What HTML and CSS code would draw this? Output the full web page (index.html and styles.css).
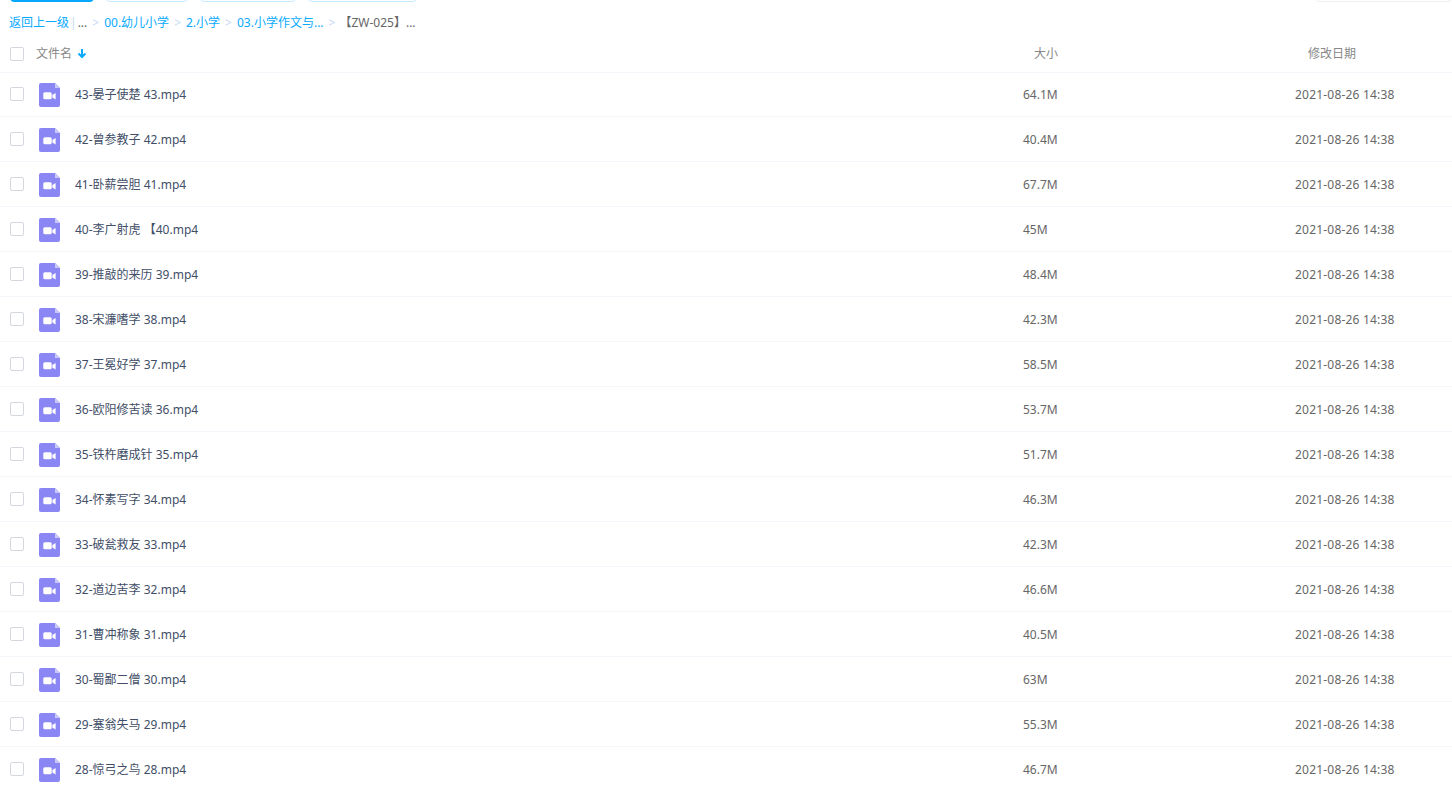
FILE: index.html
```html
<!DOCTYPE html>
<html lang="en">
<head>
    <meta charset="UTF-8">
    <title>文件列表</title>
    <link rel="stylesheet" href="styles.css">
</head>
<body>
    <div class="toolbar">
        <button class="btn btn-primary"></button>
        <button class="btn btn-a"></button>
        <button class="btn btn-b"></button>
        <button class="btn btn-c"></button>
        <button class="btn-search"></button>
    </div>

    <div class="crumbs">
        <a href="#">返回上一级</a><span class="pipe">|</span><span class="dots">...</span>
        <span class="sep">&gt;</span><a href="#">00.幼儿小学</a>
        <span class="sep">&gt;</span><a href="#">2.小学</a>
        <span class="sep">&gt;</span><a href="#">03.小学作文与...</a>
        <span class="sep">&gt;</span><span class="current">【ZW-025】...</span>
    </div>

    <div class="row head">
        <span class="check"></span>
        <span class="name">文件名 <svg class="arrow" width="10" height="11" viewBox="0 0 10 11"><path d="M5 1v8M1.5 5.5 5 9l3.5-3.5" fill="none" stroke="#09aaff" stroke-width="2"/></svg></span>
        <span class="size">大小</span>
        <span class="date">修改日期</span>
    </div>

    <div id="list"></div>

    <script src="list.js"></script>
</body>
</html>
```
FILE: list.js
```js
var files = [
    ["43-晏子使楚 43.mp4", "64.1M"],
    ["42-曾参教子 42.mp4", "40.4M"],
    ["41-卧薪尝胆 41.mp4", "67.7M"],
    ["40-李广射虎 【40.mp4", "45M"],
    ["39-推敲的来历 39.mp4", "48.4M"],
    ["38-宋濂嗜学 38.mp4", "42.3M"],
    ["37-王冕好学 37.mp4", "58.5M"],
    ["36-欧阳修苦读 36.mp4", "53.7M"],
    ["35-铁杵磨成针 35.mp4", "51.7M"],
    ["34-怀素写字 34.mp4", "46.3M"],
    ["33-破瓮救友 33.mp4", "42.3M"],
    ["32-道边苦李 32.mp4", "46.6M"],
    ["31-曹冲称象 31.mp4", "40.5M"],
    ["30-蜀鄙二僧 30.mp4", "63M"],
    ["29-塞翁失马 29.mp4", "55.3M"],
    ["28-惊弓之鸟 28.mp4", "46.7M"]
];

var icon = '<svg class="icon" width="21" height="24" viewBox="0 0 21 24">' +
    '<path d="M2 0h14l5 5v17a2 2 0 0 1-2 2H2a2 2 0 0 1-2-2V2a2 2 0 0 1 2-2z" fill="#8a86f4"/>' +
    '<path d="M16 0l5 5h-5z" fill="#c9c7fb"/>' +
    '<rect x="4.3" y="9.3" width="8.4" height="7" rx="1.5" fill="#fff"/>' +
    '<path d="M13.4 12l3.2-2v6.4l-3.2-2z" fill="#fff"/></svg>';

var html = "";
for (var i = 0; i < files.length; i++) {
    html += '<div class="row item"><span class="check"></span>' + icon +
        '<span class="title">' + files[i][0] + '</span>' +
        '<span class="size">' + files[i][1] + '</span>' +
        '<span class="date">2021-08-26 14:38</span></div>';
}
document.getElementById("list").innerHTML = html;
```
FILE: styles.css
```css
body {
    margin: 0;
    height: 786px;
    overflow: hidden;
    background-color: #fff;
    font-family: "Noto Sans", "Noto Sans CJK SC", sans-serif;
    font-size: 12px;
    line-height: 16px;
    color: #424e67;
}
.toolbar {
    display: flex;
    height: 2px;
    padding-left: 10px;
    overflow: hidden;
}
.btn {
    height: 30px;
    margin-top: -28px;
    margin-right: 12px;
    border: 1px solid #c3eaff;
    border-radius: 4px;
    background-color: #fff;
    box-sizing: border-box;
}
.btn-primary {
    width: 84px;
    border-color: #06a7ff;
    background-color: #06a7ff;
}
.btn-a { width: 82px; }
.btn-b { width: 96px; }
.btn-c { width: 109px; }
.btn-search {
    width: 137px;
    height: 30px;
    margin-top: -28px;
    margin-left: auto;
    border: 1px solid #eeeeee;
    border-radius: 4px;
    background-color: #fff;
}
.crumbs {
    display: flex;
    align-items: center;
    height: 20px;
    margin-top: 11px;
    padding-left: 9px;
    white-space: pre;
    color: #666;
}
.crumbs a {
    color: #09aaff;
    text-decoration: none;
}
.pipe {
    margin: 0 1px;
    color: #c4d8f4;
}
.sep {
    margin: 0 5px;
    color: #c4d8f4;
}
.current {
    margin-left: -1px;
}
.row {
    display: flex;
    align-items: center;
    height: 44px;
    border-bottom: 1px solid #f3f6fb;
}
.head {
    height: 39px;
    color: #888;
}
#list {
    margin-top: -1px;
}
.check {
    flex: none;
    width: 12px;
    height: 12px;
    margin-left: 10px;
    border: 1px solid #d4d7de;
    border-radius: 2px;
}
.head .check {
    margin-top: 3px;
}
.name {
    margin-top: 2px;
    margin-left: 12px;
}
.arrow {
    margin-left: 2px;
    vertical-align: -1px;
}
.icon {
    flex: none;
    margin-top: 2px;
    margin-left: 15px;
}
.title {
    margin-top: 2px;
    margin-left: 15px;
    width: 300px;
}
.size {
    position: absolute;
    left: 1023px;
    margin-top: 2px;
    color: #666;
}
.head .size {
    left: 1034px;
    color: #888;
}
.date {
    position: absolute;
    left: 1295px;
    margin-top: 2px;
    letter-spacing: 0.2px;
    color: #666;
}
.head .date {
    left: 1308px;
    letter-spacing: 0;
    color: #888;
}
```
